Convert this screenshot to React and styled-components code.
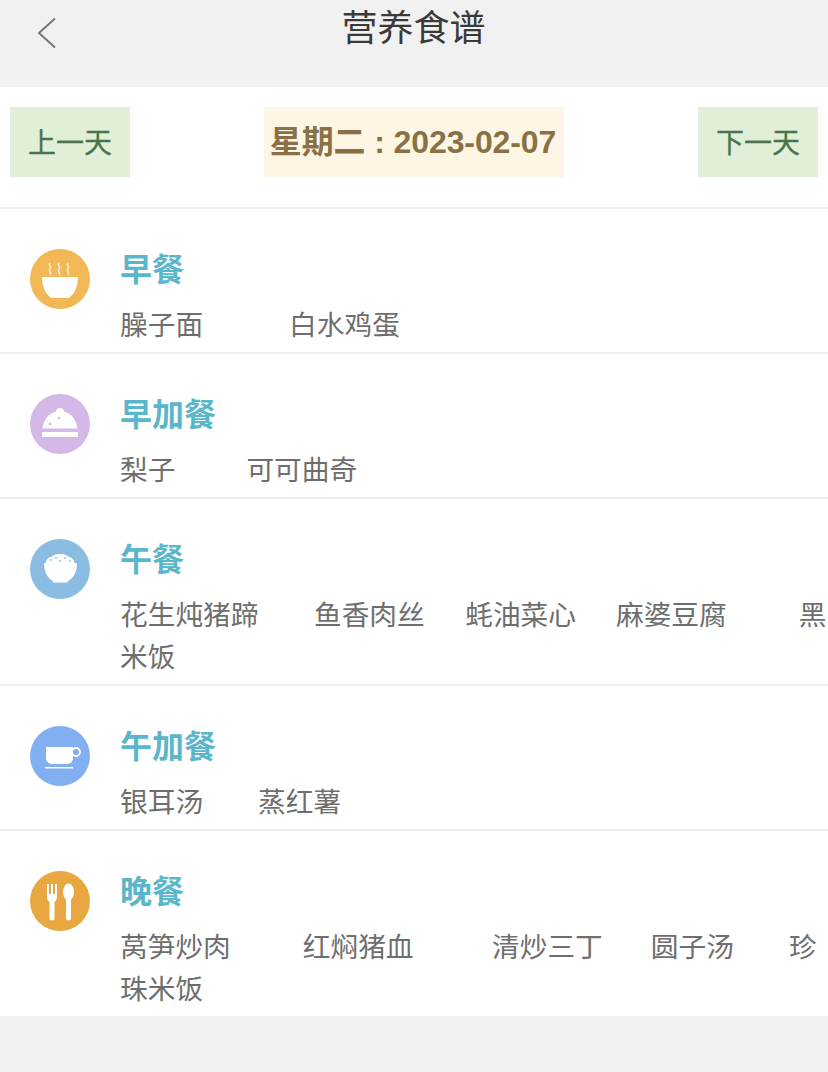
import React from 'react'
import styled, { createGlobalStyle } from 'styled-components'

const GlobalStyle = createGlobalStyle`
    html, body {
        margin: 0;
        padding: 0;
        background: #f1f1f1;
        font-family: "Liberation Sans", "Noto Sans CJK SC", sans-serif;
    }
`

const Page = styled.div`
    width: 828px;
    height: 1072px;
    overflow: hidden;
`

const Header = styled.header`
    display: flex;
    justify-content: center;
    position: relative;
    height: 87px;
    background: #f1f1f1;
`

const BackButton = styled.button`
    position: absolute;
    top: 16px;
    left: 34px;
    padding: 0;
    width: 26px;
    height: 34px;
    border: 0;
    background: none;
`

const Title = styled.h1`
    margin: 7px 0 0 -1px;
    font-size: 36px;
    line-height: 44px;
    font-weight: 400;
    color: #3a3a3a;
`

const DateBar = styled.div`
    display: flex;
    justify-content: space-between;
    padding: 20px 10px 30px;
    height: 122px;
    box-sizing: border-box;
    background: #fff;
    border-bottom: 2px solid #eeeeee;
`

const DayButton = styled.button`
    width: 120px;
    height: 70px;
    padding: 0 0 3px;
    border: 0;
    background: #e1efd9;
    color: #4a744d;
    font-family: inherit;
    font-size: 28px;
    font-weight: 400;
    -webkit-text-stroke: 0.3px #4a744d;
`

const DateLabel = styled.div`
    width: 300px;
    height: 70px;
    padding-right: 2px;
    box-sizing: border-box;
    background: #fdf6e4;
    color: #8a7145;
    font-size: 32px;
    line-height: 70px;
    font-weight: 700;
    letter-spacing: -0.1px;
    text-align: center;
    white-space: nowrap;
`

const MealList = styled.div`
    background: #fff;
`

const MealRow = styled.section`
    display: flex;
    gap: 30px;
    box-sizing: border-box;
    padding: 40px 0 5.5px 30px;
    border-bottom: 2px solid #eeeeee;

    &:last-child {
        border-bottom: 0;
        min-height: 185px;
    }
`

const IconCircle = styled.div`
    flex: none;
    width: 60px;
    height: 60px;
    border-radius: 50%;
    background: ${({ $color }) => $color};
`

const MealBody = styled.div`
    flex: 1;
    min-width: 0;
`

const MealName = styled.h2`
    margin: 0;
    padding-top: 0.5px;
    font-size: 32px;
    line-height: 40px;
    font-weight: 700;
    color: #5ab6ca;
`

const Dishes = styled.p`
    margin: 15px 0 0;
    font-size: 27.7px;
    line-height: 42px;
    color: #6e6e6e;
`

const Dish = styled.span`
    margin-right: ${({ $gap }) => $gap}px;
`

const svgProps = { width: 60, height: 60, viewBox: '0 0 60 60' }

const SoupIcon = () => (
    <svg {...svgProps}>
        <g fill="none" stroke="#fff" strokeWidth="1.5" opacity="0.8">
            <path d="M20 14c-2.500 2.500 2.500 3.500 0 6s2.500 3.500 0 6" />
            <path d="M29 14c-2.500 2.500 2.500 3.500 0 6s2.500 3.500 0 6" />
            <path d="M38 14c-2.500 2.500 2.500 3.500 0 6s2.500 3.500 0 6" />
        </g>
        <path fill="#fff" d="M12 28h36c0 10-4 17-9 21H21c-5-4-9-11-9-21z" />
    </svg>
)

const ClocheIcon = () => (
    <svg {...svgProps}>
        <path fill="#fff" d="M30 14c2.500 0 4 1.500 4 3.500 8 2 12 8 13.500 17h-35c1.500-9 5.500-15 13.500-17 0-2 1.500-3.500 4-3.500z" />
        <path fill="#fff" d="M12 38h36v5H12z" />
        <circle cx="29" cy="24" r="1.300" fill="#d4b8e8" />
        <circle cx="20" cy="30" r="1.300" fill="#d4b8e8" />
    </svg>
)

const RiceIcon = () => (
    <svg {...svgProps}>
        <path
            fill="#fff"
            d="M14 24h1.500c1-4 3-6 6.500-6.500 2-2 5-2.500 8-2.500s6 .5 8 2.500c3.500.5 5.500 2.500 6.500 6.500H47c0 9-4 16-9 18v1.500H23V42c-5-2-9-9-9-18z"
        />
        <g fill="#8bbde3">
            <circle cx="21" cy="21" r="0.900" />
            <circle cx="26" cy="19" r="0.900" />
            <circle cx="30" cy="22" r="0.900" />
            <circle cx="35" cy="19" r="0.900" />
            <circle cx="40" cy="22" r="0.900" />
        </g>
    </svg>
)

const CupIcon = () => (
    <svg {...svgProps}>
        <path fill="#fff" d="M16 21h27v11c0 4-3 6-6 6H22c-3 0-6-2-6-6z" />
        <circle cx="46" cy="26" r="4" fill="none" stroke="#fff" strokeWidth="1.800" />
        <path fill="#fff" d="M15 41h28v1.500H15z" />
    </svg>
)

const CutleryIcon = () => (
    <svg {...svgProps}>
        <path
            fill="#fff"
            d="M17 13h2v10h2V13h2v10h2V13h2v13c0 2.500-1.500 4.500-2.500 5v16.500c0 1-1 2-2.500 2s-2.500-1-2.500-2V31c-1-.5-2.500-2.500-2.500-5z"
        />
        <ellipse cx="38.500" cy="21" rx="5.500" ry="8.500" fill="#fff" />
        <path fill="#fff" d="M36 26h5v21.500c0 1-1 2-2.500 2s-2.500-1-2.500-2z" />
    </svg>
)

const meals = [
    {
        name: '早餐',
        color: '#f2b856',
        Icon: SoupIcon,
        dishes: [
            ['臊子面', 86],
            ['白水鸡蛋', 0],
        ],
    },
    {
        name: '早加餐',
        color: '#d4b8e8',
        Icon: ClocheIcon,
        dishes: [
            ['梨子', 71],
            ['可可曲奇', 0],
        ],
    },
    {
        name: '午餐',
        color: '#8bbde3',
        Icon: RiceIcon,
        dishes: [
            ['花生炖猪蹄', 55.5],
            ['鱼香肉丝', 40.5],
            ['蚝油菜心', 40],
            ['麻婆豆腐', 72],
            ['黑米饭', 0],
        ],
    },
    {
        name: '午加餐',
        color: '#82aef2',
        Icon: CupIcon,
        dishes: [
            ['银耳汤', 55],
            ['蒸红薯', 0],
        ],
    },
    {
        name: '晚餐',
        color: '#e8a740',
        Icon: CutleryIcon,
        dishes: [
            ['莴笋炒肉', 72],
            ['红焖猪血', 78.5],
            ['清炒三丁', 48],
            ['圆子汤', 55],
            ['珍珠米饭', 0],
        ],
    },
]

const App = () => (
    <Page>
        <GlobalStyle />
        <Header>
            <BackButton aria-label="返回">
                <svg width="26" height="34" viewBox="0 0 26 34">
                    <path d="M21 2.500 5 17l16 14.500" fill="none" stroke="#777" strokeWidth="2" />
                </svg>
            </BackButton>
            <Title>营养食谱</Title>
        </Header>
        <DateBar>
            <DayButton>上一天</DayButton>
            <DateLabel>星期二 : 2023-02-07</DateLabel>
            <DayButton>下一天</DayButton>
        </DateBar>
        <MealList>
            {meals.map(({ name, color, Icon, dishes }) => (
                <MealRow key={name}>
                    <IconCircle $color={color}>
                        <Icon />
                    </IconCircle>
                    <MealBody>
                        <MealName>{name}</MealName>
                        <Dishes>
                            {dishes.map(([dish, gap]) => (
                                <Dish key={dish} $gap={gap}>
                                    {dish}
                                </Dish>
                            ))}
                        </Dishes>
                    </MealBody>
                </MealRow>
            ))}
        </MealList>
    </Page>
)

export default App
